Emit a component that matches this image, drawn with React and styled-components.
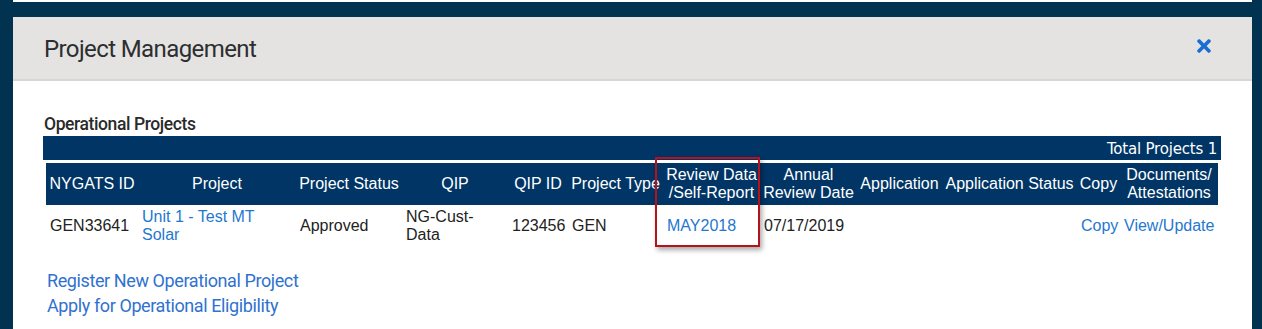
import React from "react";
import styled, { createGlobalStyle } from "styled-components";
import { FaTimes } from "react-icons/fa";

const GlobalStyle = createGlobalStyle`
  html, body {
    margin: 0;
    padding: 0;
    background: #01324f;
  }
`;

const columns = [
  { key: "id", title: "NYGATS ID", width: 92 },
  { key: "project", title: "Project", width: 158 },
  { key: "status", title: "Project Status", width: 106 },
  { key: "qip", title: "QIP", width: 106 },
  { key: "qipId", title: "QIP ID", width: 60 },
  { key: "type", title: "Project Type", width: 95 },
  { key: "review", title: ["Review Data", "/Self-Report"], width: 97 },
  { key: "annual", title: ["Annual", "Review Date"], width: 97 },
  { key: "application", title: "Application", width: 85 },
  { key: "appStatus", title: "Application Status", width: 135 },
  { key: "copy", title: "Copy", width: 43 },
  { key: "docs", title: ["Documents/", "Attestations"], width: 98 },
];

// objects with a label are links, plain strings are text
const rows = [
  {
    id: "GEN33641",
    project: { label: "Unit 1 - Test MT Solar" },
    status: "Approved",
    qip: "NG-Cust-Data",
    qipId: "123456",
    type: "GEN",
    review: { label: "MAY2018" },
    annual: "07/17/2019",
    application: "",
    appStatus: "",
    copy: { label: "Copy" },
    docs: { label: "View/Update" },
  },
];

function App() {
  return (
    <>
      <GlobalStyle />
      <Page>
        <TopStrip />
        <Panel>
          <PanelHeader>
            <Title>Project Management</Title>
            <CloseButton href="#" aria-label="close">
              <FaTimes size={20} />
            </CloseButton>
          </PanelHeader>
          <PanelBody>
            <SectionLabel>Operational Projects</SectionLabel>
            <TableWrap>
              <TotalBar>Total Projects 1</TotalBar>
              <Table>
                <colgroup>
                  {columns.map((c) => (
                    <col key={c.key} style={{ width: c.width }} />
                  ))}
                </colgroup>
                <thead>
                  <tr>
                    {columns.map((c) => (
                      <Th key={c.key}>
                        {Array.isArray(c.title) ? (
                          <>
                            {c.title[0]}
                            <br />
                            {c.title[1]}
                          </>
                        ) : (
                          c.title
                        )}
                      </Th>
                    ))}
                  </tr>
                </thead>
                <tbody>
                  {rows.map((r) => (
                    <tr key={r.id}>
                      {columns.map((c) => {
                        const v = r[c.key];
                        return (
                          <Td key={c.key}>
                            {typeof v === "object" ? <CellLink href="#">{v.label}</CellLink> : v}
                          </Td>
                        );
                      })}
                    </tr>
                  ))}
                </tbody>
              </Table>
              <Highlight />
            </TableWrap>
            <Actions>
              <ActionLink href="#">Register New Operational Project</ActionLink>
              <ActionLink href="#">Apply for Operational Eligibility</ActionLink>
            </Actions>
          </PanelBody>
        </Panel>
      </Page>
    </>
  );
}

export default App;

const Page = styled.div`
  padding: 0 10px 0 13px;
  height: 329px;
  overflow: hidden;
  box-sizing: border-box;
`;

const TopStrip = styled.div`
  height: 2px;
  background: #ffffff;
  margin-bottom: 15px;
`;

const Panel = styled.section`
  background: #ffffff;
  min-height: 400px;
`;

const PanelHeader = styled.header`
  height: 62px;
  background: #e4e3e2;
  border-bottom: 2px solid #d9d6d2;
  display: flex;
  align-items: center;
  justify-content: space-between;
  padding: 0 38px 0 31px;
`;

const Title = styled.h2`
  margin: 0;
  font-family: Roboto, "Noto Sans", sans-serif;
  font-weight: 400;
  font-size: 24px;
  letter-spacing: -0.6px;
  color: #2c2e30;
  padding-top: 2px;
`;

const CloseButton = styled.a`
  display: flex;
  color: #1a6dd2;
  margin-top: -4px;
`;

const PanelBody = styled.div`
  padding: 33px 31px 0 30px;
`;

const SectionLabel = styled.div`
  font-family: Roboto, "Noto Sans", sans-serif;
  font-weight: 500;
  font-size: 17.5px;
  letter-spacing: -0.4px;
  line-height: 20px;
  color: #2a2a2a;
  margin: 0 0 2px 1px;
`;

const TableWrap = styled.div`
  position: relative;
  width: 1178px;
`;

const TotalBar = styled.div`
  height: 24px;
  box-sizing: border-box;
  padding: 2px 4px 0 0;
  line-height: 22px;
  background: #003566;
  color: #ffffff;
  text-align: right;
  font-family: "DejaVu Sans", Verdana, sans-serif;
  font-size: 15px;
  letter-spacing: -0.2px;
`;

const Table = styled.table`
  margin: 3px 3px 0;
  width: 1172px;
  table-layout: fixed;
  border-collapse: collapse;
  font-family: "Liberation Sans", Arial, sans-serif;
  font-size: 16px;
  line-height: 18px;
`;

const Th = styled.th`
  background: #003566;
  color: #ffffff;
  font-weight: 400;
  text-align: center;
  vertical-align: middle;
  white-space: nowrap;
  padding: 3px 2px;
  height: 36px;
`;

const Td = styled.td`
  color: #222222;
  text-align: left;
  vertical-align: middle;
  padding: 3px 1px 3px 4px;
  height: 36px;
`;

const CellLink = styled.a`
  color: #1f77d0;
  text-decoration: none;
`;

const Highlight = styled.div`
  position: absolute;
  left: 612px;
  top: 21px;
  width: 105px;
  height: 90px;
  box-sizing: border-box;
  border: 2px solid #b5121b;
  box-shadow: 2px 3px 5px rgba(0, 0, 0, 0.35);
  pointer-events: none;
`;

const Actions = styled.div`
  display: flex;
  flex-direction: column;
  align-items: flex-start;
  margin-top: 21px;
  padding-left: 4px;
`;

const ActionLink = styled.a`
  font-family: Roboto, "Noto Sans", sans-serif;
  font-size: 18px;
  letter-spacing: -0.4px;
  line-height: 25px;
  color: #2f72cf;
  text-decoration: none;
`;
